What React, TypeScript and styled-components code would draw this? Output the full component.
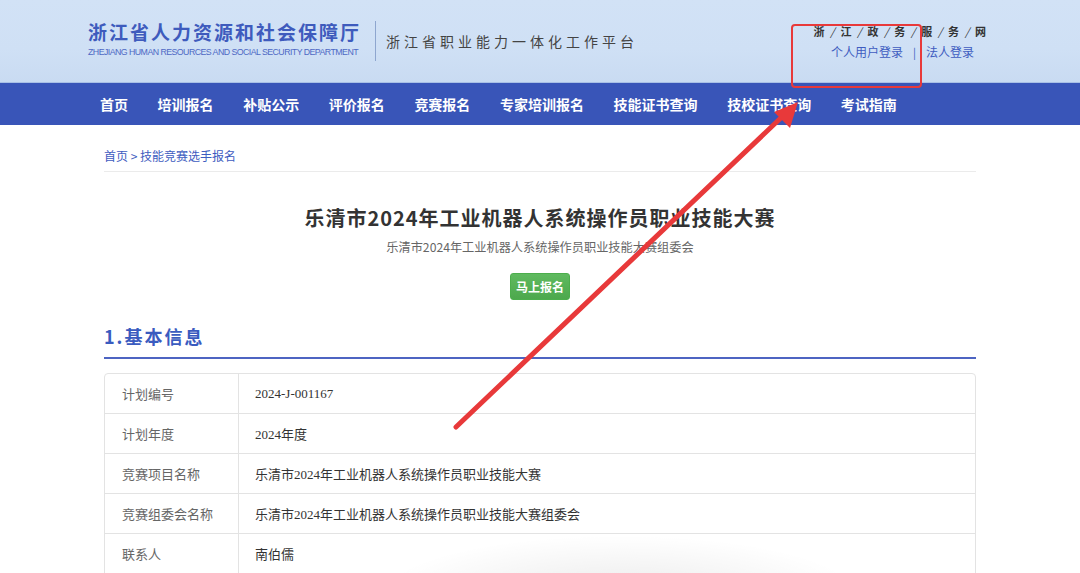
import React from "react";
import styled, { createGlobalStyle } from "styled-components";

interface InfoRow {
  label: string;
  value: string;
}

const navItems = [
  "首页",
  "培训报名",
  "补贴公示",
  "评价报名",
  "竞赛报名",
  "专家培训报名",
  "技能证书查询",
  "技校证书查询",
  "考试指南",
];

const govChars = ["浙", "江", "政", "务", "服", "务", "网"];

const rows: InfoRow[] = [
  { label: "计划编号", value: "2024-J-001167" },
  { label: "计划年度", value: "2024年度" },
  { label: "竞赛项目名称", value: "乐清市2024年工业机器人系统操作员职业技能大赛" },
  { label: "竞赛组委会名称", value: "乐清市2024年工业机器人系统操作员职业技能大赛组委会" },
  { label: "联系人", value: "南伯儒" },
];

const App: React.FC = () => {
  return (
    <Page>
      <GlobalStyle />
      <Header>
        <HeaderInner>
          <Brand>
            <BrandName>浙江省人力资源和社会保障厅</BrandName>
            <BrandEn>ZHEJIANG HUMAN RESOURCES AND SOCIAL SECURITY DEPARTMENT</BrandEn>
          </Brand>
          <Divider />
          <Platform>浙江省职业能力一体化工作平台</Platform>
          <RightBox>
            <GovLine>
              {govChars.map((c, i) => (
                <React.Fragment key={i}>
                  {i > 0 && <Slash>/</Slash>}
                  <span>{c}</span>
                </React.Fragment>
              ))}
            </GovLine>
            <LoginLine>
              <LoginLink>个人用户登录</LoginLink>
              <Bar>|</Bar>
              <LoginLink>法人登录</LoginLink>
            </LoginLine>
          </RightBox>
        </HeaderInner>
      </Header>

      <Nav>
        <NavInner>
          {navItems.map((item) => (
            <NavItem key={item}>{item}</NavItem>
          ))}
        </NavInner>
      </Nav>

      <Main>
        <Breadcrumb>首页 &gt; 技能竞赛选手报名</Breadcrumb>
        <Title>乐清市2024年工业机器人系统操作员职业技能大赛</Title>
        <SubTitle>乐清市2024年工业机器人系统操作员职业技能大赛组委会</SubTitle>
        <ButtonRow>
          <SignupButton>马上报名</SignupButton>
        </ButtonRow>
        <SectionTitle>1.基本信息</SectionTitle>
        <Table>
          {rows.map((r) => (
            <Row key={r.label}>
              <Label>{r.label}</Label>
              <Value>{r.value}</Value>
            </Row>
          ))}
        </Table>
      </Main>

      {/* 标注 */}
      <RedBox />
      <ArrowLayer width="1080" height="573" viewBox="0 0 1080 573">
        <line x1="456" y1="427" x2="786" y2="113" stroke="#e8393a" strokeWidth="5" strokeLinecap="round" />
        <polygon points="798,102 774,112 790,128" fill="#e8393a" />
      </ArrowLayer>
      <Shade />
    </Page>
  );
};

export default App;

const GlobalStyle = createGlobalStyle`
  html, body {
    margin: 0;
    padding: 0;
    background: #fff;
    overflow: hidden;
  }
  body {
    font-family: "Noto Sans CJK SC", "Liberation Sans", sans-serif;
  }
`;

const Page = styled.div`
  position: relative;
  width: 1080px;
  height: 573px;
  overflow: hidden;
`;

const Header = styled.header`
  height: 82px;
  background: linear-gradient(180deg, #d2e2f6 0%, #cfe0f5 60%, #c9dbf2 100%);
  border-bottom: 1px solid #a9c0e6;
`;

const HeaderInner = styled.div`
  width: 904px;
  margin: 0 auto;
  height: 100%;
  display: flex;
  align-items: center;
`;

const Brand = styled.div`
  display: flex;
  flex-direction: column;
  margin-top: -4px;
`;

const BrandName = styled.div`
  font-size: 19px;
  font-weight: 700;
  letter-spacing: 2px;
  color: #3e5bbd;
  line-height: 24px;
`;

const BrandEn = styled.div`
  font-family: "Liberation Sans", sans-serif;
  font-size: 8.8px;
  letter-spacing: -0.55px;
  color: #4d68c4;
  line-height: 12px;
  margin-top: 2px;
  white-space: nowrap;
`;

const Divider = styled.div`
  width: 1px;
  height: 40px;
  background: #8ea6cf;
  margin: 0 10px 0 14px;
`;

const Platform = styled.div`
  font-size: 14px;
  letter-spacing: 4px;
  color: #444;
`;

const RightBox = styled.div`
  margin-left: auto;
  margin-right: 6px;
  display: flex;
  flex-direction: column;
  align-items: flex-end;
  margin-top: 1px;
`;

const GovLine = styled.div`
  display: flex;
  gap: 5.8px;
  font-size: 11px;
  color: #333;
  font-weight: 700;
  line-height: 16px;
`;

const Slash = styled.span`
  font-weight: 400;
  font-style: italic;
`;

const LoginLine = styled.div`
  display: flex;
  align-items: center;
  margin-top: 4px;
  margin-right: 12px;
  font-size: 12px;
  color: #3e5cc0;
  line-height: 18px;
`;

const LoginLink = styled.span`
  cursor: pointer;
`;

const Bar = styled.span`
  margin: 0 10px;
  font-size: 11px;
`;

const Nav = styled.nav`
  height: 42px;
  background: #3955b8;
`;

const NavInner = styled.div`
  width: 880px;
  margin: 0 auto;
  height: 100%;
  display: flex;
  align-items: center;
  gap: 29.6px;
`;

const NavItem = styled.span`
  color: #fff;
  font-size: 14px;
  font-weight: 700;
  cursor: pointer;
`;

const Main = styled.main`
  width: 872px;
  margin: 0 auto;
  display: flex;
  flex-direction: column;
`;

const Breadcrumb = styled.div`
  margin-top: 21px;
  padding-bottom: 5px;
  line-height: 20px;
  font-size: 12px;
  color: #3e5cc0;
  border-bottom: 1px solid #ebebeb;
`;

const Title = styled.h1`
  margin: 32px 0 0;
  text-align: center;
  font-size: 20px;
  line-height: 28px;
  letter-spacing: 1px;
  color: #333;
  font-weight: 700;
`;

const SubTitle = styled.div`
  margin-top: 5px;
  text-align: center;
  font-size: 12.2px;
  line-height: 20px;
  color: #666;
`;

const ButtonRow = styled.div`
  display: flex;
  justify-content: center;
  margin-top: 16px;
`;

const SignupButton = styled.button`
  width: 60px;
  height: 27px;
  border: 1px solid #4cae4c;
  border-radius: 3px;
  background: linear-gradient(180deg, #5fba5f 0%, #4da84d 100%);
  color: #fff;
  font-family: "Noto Sans CJK SC", sans-serif;
  font-size: 12px;
  font-weight: 700;
  padding: 0;
  cursor: pointer;
`;

const SectionTitle = styled.h2`
  margin: 21px 0 0;
  padding-bottom: 6px;
  line-height: 30px;
  font-size: 18px;
  letter-spacing: 2px;
  color: #3a5bbf;
  font-weight: 700;
  border-bottom: 2px solid #4d64c2;
`;

const Table = styled.div`
  margin-top: 14px;
  border: 1px solid #e3e3e3;
  border-radius: 4px 4px 0 0;
  display: flex;
  flex-direction: column;
`;

const Row = styled.div`
  display: flex;
  height: 39px;
  border-top: 1px solid #e3e3e3;

  &:first-child {
    border-top: none;
  }
`;

const Label = styled.div`
  width: 116px;
  padding-left: 17px;
  border-right: 1px solid #e3e3e3;
  display: flex;
  align-items: center;
  font-size: 13px;
  color: #666;
`;

const Value = styled.div`
  flex: 1;
  padding-left: 16px;
  display: flex;
  align-items: center;
  font-family: "Liberation Serif", "Noto Sans CJK SC", serif;
  font-size: 13px;
  color: #333;
`;

const RedBox = styled.div`
  position: absolute;
  left: 791px;
  top: 24px;
  width: 127px;
  height: 60px;
  border: 2px solid #e8393a;
  border-radius: 4px;
  pointer-events: none;
`;

const ArrowLayer = styled.svg`
  position: absolute;
  left: 0;
  top: 0;
  pointer-events: none;
`;

const Shade = styled.div`
  position: absolute;
  left: 360px;
  top: 530px;
  width: 520px;
  height: 80px;
  background: radial-gradient(ellipse at 50% 80%, rgba(0, 0, 0, 0.08), rgba(0, 0, 0, 0) 65%);
  pointer-events: none;
`;
